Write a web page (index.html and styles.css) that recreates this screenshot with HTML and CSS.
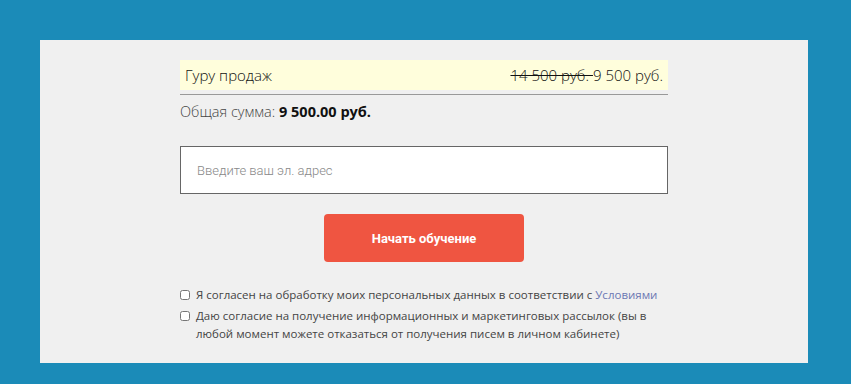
FILE: index.html
```html
<!DOCTYPE html>
<html lang="ru">
<head>
<meta charset="utf-8">
<link rel="stylesheet" href="styles.css">
</head>
<body>
<div class="panel">
  <div class="col">
    <div class="item">
      <span class="name">Гуру продаж</span>
      <span class="price"><s class="old">14 500 руб. </s>9 500 руб.</span>
    </div>
    <div class="total">Общая сумма: <b>9 500.00 руб.</b></div>
    <input class="email" type="text" placeholder="Введите ваш эл. адрес">
    <div class="btn-row"><button class="btn">Начать обучение</button></div>
    <label class="check"><input type="checkbox"><span>Я согласен на обработку моих персональных данных в соответствии с <a href="#">Условиями</a></span></label>
    <label class="check"><input type="checkbox"><span>Даю согласие на получение информационных и маркетинговых рассылок (вы в любой момент можете отказаться от получения писем в личном кабинете)</span></label>
  </div>
</div>
</body>
</html>
```
FILE: styles.css
```css
html, body { margin: 0; padding: 0; }
body {
  background: #1b8bb8;
  padding: 40px 43px 21px 40px;
  font-family: "Open Sans", "Liberation Sans", sans-serif;
}
.panel {
  background: #f0f0f0;
  height: 323px;
  padding-top: 20px;
  box-sizing: border-box;
}
.col {
  width: 488px;
  margin-left: 140px;
}
.item {
  display: flex;
  justify-content: space-between;
  align-items: center;
  background: #fffedc;
  height: 30px;
  padding: 0 5px;
  font-size: 15px;
  font-weight: 300;
  color: #111;
  border-bottom: 2px solid #f0f0f0;
  box-shadow: 0 2px 0 0 #f0f0f0, 0 3px 0 0 #999;
  margin-bottom: 5px;
}
.old { color: #111; }
.total {
  font-size: 14.5px;
  font-weight: 300;
  color: #444;
  margin-top: 10px;
  line-height: 20px;
}
.total b { color: #111; font-weight: 700; }
.email {
  display: block;
  box-sizing: border-box;
  width: 488px;
  height: 48px;
  margin-top: 24px;
  border: 1px solid #666;
  background: #fff;
  padding: 0 16px;
  font-family: Roboto, sans-serif;
  font-size: 13px;
  color: #333;
  outline: none;
}
.email::placeholder { color: #888; font-weight: 300; }
.btn-row { display: flex; justify-content: center; margin-top: 20px; margin-bottom: 24px; }
.btn {
  width: 200px;
  height: 48px;
  border: none;
  border-radius: 4px;
  background: #ef5541;
  color: #fff;
  font-family: Roboto, sans-serif;
  font-weight: 700;
  font-size: 13px;
}
.check {
  display: flex;
  align-items: flex-start;
  font-size: 11.5px;
  color: #444;
  line-height: 18px;
  margin-bottom: 3px;
}
.check input {
  width: 10px;
  height: 10px;
  margin: 4px 6px 0 0;
  flex: none;
}
.check a { color: #6b77b3; text-decoration: none; }
```
